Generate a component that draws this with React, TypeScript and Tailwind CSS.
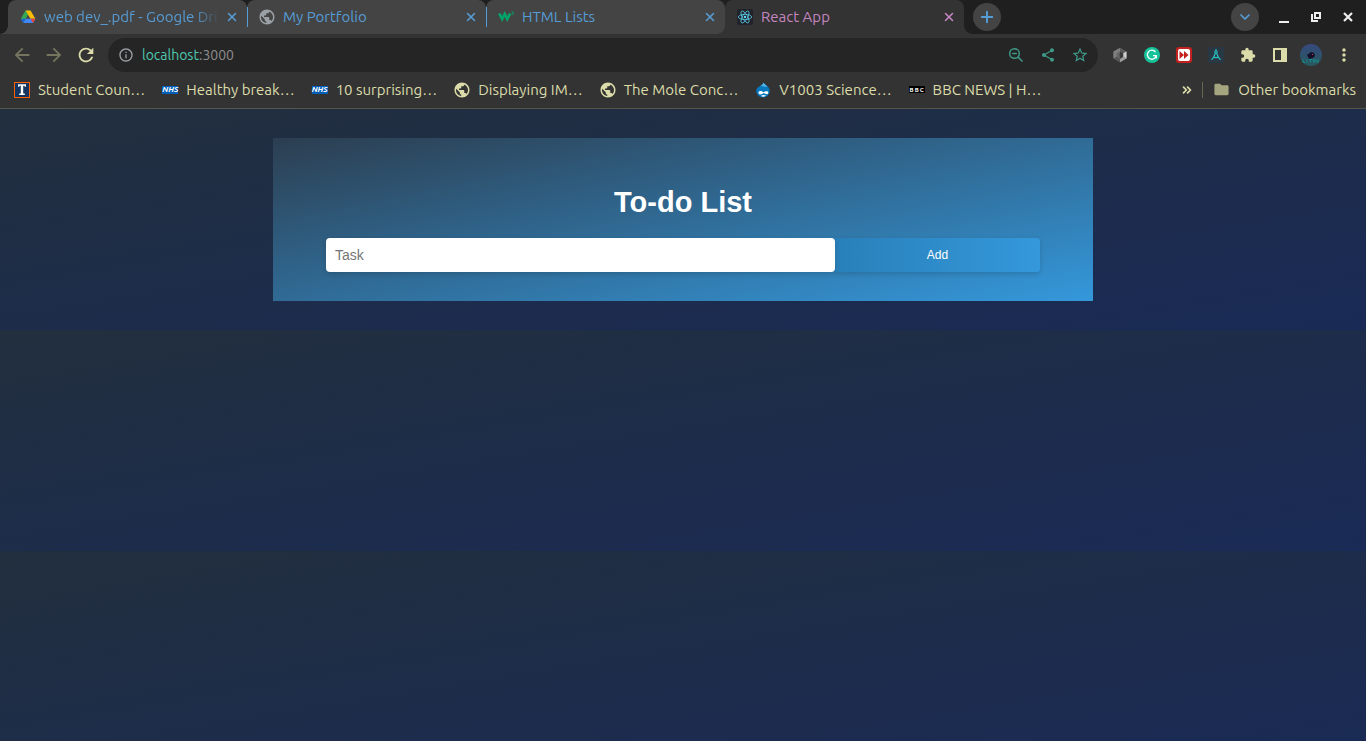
import React from "react";
import { X, Plus, ChevronDown, ChevronsRight } from "lucide-react";
import { MdArrowBack, MdArrowForward, MdRefresh, MdInfoOutline, MdPublic, MdShare, MdStarBorder, MdExtension, MdMoreVert, MdFolder } from "react-icons/md";

function Globe({ className }: { className: string }) {
  return (
    <span className={`flex size-4 shrink-0 items-center justify-center ${className}`} aria-hidden="true">
      <MdPublic size={18} className="shrink-0" />
    </span>
  );
}

function Drive() {
  return (
    <svg viewBox="0 0 16 16" className="size-4 shrink-0" aria-hidden="true">
      <path d="M5.500 1.500h5L8 5.800z" fill="#188038" />
      <path d="M5.500 1.500 8 5.800 3.400 14 .8 9.800z" fill="#34a853" />
      <path d="M10.500 1.500 15.400 9.800h-5L8 5.800 5.500 1.500z" fill="#fbbc04" />
      <path d="M5.700 9.800h9.700L13 14H3.200z" fill="#4285f4" />
      <path d="M10.500 9.800h4.900L13 14z" fill="#ea4335" />
      <path d="M.8 9.800h4.900L3.200 14z" fill="#1967d2" />
    </svg>
  );
}

function W3() {
  return (
    <svg viewBox="0 0 16 16" className="size-4 shrink-0" aria-hidden="true" fill="none" stroke="#04a36a">
      <path d="m1.200 4.500 3 5.500L6.700 5l2.500 5 3-5.500" strokeWidth="2.700" />
      <path d="M13.500 3h2l-1 1.200c1.500 0 1.300 1.900-.9 1.500" strokeWidth=".8" />
    </svg>
  );
}

function ReactLogo() {
  return (
    <svg viewBox="0 0 16 16" className="size-4 shrink-0" aria-hidden="true" fill="none" stroke="#61dafb" strokeWidth=".7">
      <rect width="16" height="16" rx="2" fill="#20232a" stroke="none" />
      <ellipse cx="8" cy="8" rx="6.700" ry="2.600" />
      <ellipse cx="8" cy="8" rx="6.700" ry="2.600" transform="rotate(60 8 8)" />
      <ellipse cx="8" cy="8" rx="6.700" ry="2.600" transform="rotate(120 8 8)" />
      <circle cx="8" cy="8" r="1.200" fill="#61dafb" stroke="none" />
    </svg>
  );
}

function Illinois() {
  return (
    <svg viewBox="0 0 16 16" className="size-4 shrink-0" aria-hidden="true">
      <rect x=".5" y=".5" width="15" height="15" fill="#13355f" stroke="#ff5f05" />
      <path d="M4 2.200h8v2.600h-1.200l-.5-1H9.200v7.700h1.600v1.500H5.200v-1.500h1.600V3.800H5.700l-.5 1H4z" fill="#fff" />
    </svg>
  );
}

function Nhs() {
  return (
    <span className="flex h-2 w-4 shrink-0 items-center justify-center bg-[#005eb8] text-[8px] leading-none font-bold text-white italic" aria-hidden="true">NHS</span>
  );
}

function Bbc() {
  return (
    <span className="flex h-[7px] w-4 shrink-0 items-center justify-between bg-black px-px text-[6px] leading-none font-bold text-white" aria-hidden="true">
      <span>B</span>
      <span>B</span>
      <span>C</span>
    </span>
  );
}

function Drupal() {
  return (
    <svg viewBox="0 0 16 16" className="size-4 shrink-0" aria-hidden="true">
      <path d="M8.500.5c.5 2 6.300 3.500 6.300 8.500a6.800 6.500 0 0 1-13.600 0c0-4.500 6-5 7.300-8.500z" fill="#0678be" />
      <path d="M8.500.5c.5 1.500 2.500 2.400 3.900 4.100C9 5.500 8 3.500 5.500 4 7 3 8 2 8.500.5z" fill="#53b5e6" />
      <path d="M3.500 10.800c0-2 2.700-2.600 5-.5 1.700-1.500 4.800-1.600 4.800.4 0 2.300-2.800 1.400-4.500.4-1.700 1.300-5.300 2.300-5.300-.3zM6 13.800c1.500-1 3.500-1 5-.2-1 1.200-3.500 1.500-5 .2z" fill="#fff" />
    </svg>
  );
}

type TabProps = { icon: React.ReactNode; title: string; active?: boolean; first?: boolean; divider?: boolean; fade?: boolean };

function Tab({ icon, title, active, first, divider, fade }: TabProps) {
  return (
    <div className={`relative flex h-[34px] w-[239px] min-w-0 items-center rounded-t-lg pr-[7px] ${active ? "bg-[#333] text-[#c586c0]" : "bg-[#444] text-[#569cd6]"}`}>
      {first && <span className="absolute bottom-0 -left-2 size-2 bg-[radial-gradient(circle_at_0_0,#1f1f1f_7.5px,#444_8px)]" />}
      {active && <span className="absolute bottom-0 -left-2 size-2 bg-[radial-gradient(circle_at_0_0,#444_7.5px,#333_8px)]" />}
      {active && <span className="absolute -right-2 bottom-0 size-2 bg-[radial-gradient(circle_at_100%_0,#1f1f1f_7.5px,#333_8px)]" />}
      <span className={`mr-[11px] h-5 w-px shrink-0 ${divider ? "bg-[#569cd6]" : "bg-transparent"}`} />
      {icon}
      <a href="#" className={`ml-2 min-w-0 flex-1 overflow-hidden whitespace-nowrap ${fade ? "mask-r-from-85% mask-r-to-100%" : ""}`}>{title}</a>
      <button aria-label={`Close ${title}`} className="ml-1 flex size-4 shrink-0 items-center justify-center"><X size={14} strokeWidth={2.600} /></button>
    </div>
  );
}

const bookmarks: { icon: React.ReactNode; label: string }[] = [
  { icon: <Illinois />, label: "Student Coun…" },
  { icon: <Nhs />, label: "Healthy break…" },
  { icon: <Nhs />, label: "10 surprising…" },
  { icon: <Globe className="text-[#dcdcaa]" />, label: "Displaying IM…" },
  { icon: <Globe className="text-[#dcdcaa]" />, label: "The Mole Conc…" },
  { icon: <Drupal />, label: "V1003 Science…" },
  { icon: <Bbc />, label: "BBC NEWS | H…" },
];

function Extensions() {
  return (
    <div className="flex shrink-0 items-center gap-4 text-[#dcdcaa]">
      <button aria-label="Shapes extension">
        <svg viewBox="0 0 16 16" className="size-4">
          <path d="M8 1 14.500 4.500v7L8 15.200l-6.500-3.700v-7z" fill="#6f6f6f" />
          <path d="M1.500 4.500 8 1v3.500L4.800 6.300v3.500L1.500 11.500z" fill="#7f7f7f" />
          <path d="M8 1l6.500 3.500-3.300 1.800L8 4.500z" fill="#5a5a5a" />
          <path d="M14.500 4.500v7l-3.300-1.700V6.300z" fill="#cfcfcf" />
          <path d="M1.500 11.500l3.300-1.700L8 11.700v3.500z" fill="#555" />
          <path d="M8 15.200v-3.500l3.200-1.900 3.300 1.700z" fill="#9a9a9a" />
          <path d="M8 4.500l3.200 1.800v3.500L8 11.700 7 8.500z" fill="#3a3a3a" />
          <path d="M8 4.500 4.800 6.300v3.500L8 11.700 7.500 8z" fill="#666" />
        </svg>
      </button>
      <button aria-label="Grammar extension">
        <svg viewBox="0 0 16 16" className="size-4">
          <circle cx="8" cy="8" r="8" fill="#15c39a" />
          <path d="M11.500 5A4.500 4.500 0 1 0 12.300 8.700H9M12.300 8.700v2.800" fill="none" stroke="#fff" strokeWidth="1.300" />
        </svg>
      </button>
      <button aria-label="Speed extension">
        <svg viewBox="0 0 16 16" className="size-4">
          <rect width="16" height="16" rx="3" fill="#c32020" />
          <rect x="2" y="2" width="12" height="12" rx="2" fill="#fff" />
          <path d="m3.500 4 4.500 4-4.500 4zM8 4l4.500 4L8 12z" fill="#c32020" />
        </svg>
      </button>
      <button aria-label="Compass extension">
        <svg viewBox="0 0 16 16" className="size-4">
          <rect width="16" height="16" rx="2.500" fill="#293845" />
          <path d="M8 2v2M7.500 6 5.200 11l-1.700 1.800M8.500 6l2.300 5 1.700 1.800M5.500 9.800c1.500 1 3.500 1 5 0" fill="none" stroke="#28c8c8" strokeWidth="1.100" />
          <circle cx="8" cy="5" r="1.300" fill="none" stroke="#28c8c8" />
        </svg>
      </button>
      <button aria-label="Extensions"><MdExtension size={16} /></button>
      <button aria-label="Side panel">
        <svg viewBox="0 0 16 16" className="size-4"><path d="M1 1h14v14H1zM3 3v10h6V3z" fill="currentColor" fillRule="evenodd" /></svg>
      </button>
    </div>
  );
}

export default function App() {
  return (
    <div className="flex min-h-screen flex-col font-['Liberation_Sans',Arial,sans-serif]">
      <header className="bg-[#333] font-['Ubuntu','Noto_Sans',sans-serif] text-[15px] leading-5">
        <div className="flex h-[34px] items-center bg-[#1f1f1f] pl-2">
          <nav className="flex min-w-0" aria-label="Tabs">
            <Tab icon={<Drive />} title="web dev_.pdf - Google Dri" first fade />
            <Tab icon={<Globe className="text-[#9aa0a6]" />} title="My Portfolio" divider />
            <Tab icon={<W3 />} title="HTML Lists" divider />
            <Tab icon={<ReactLogo />} title="React App" active />
          </nav>
          <button aria-label="New tab" className="ml-[9px] flex size-7 shrink-0 items-center justify-center rounded-full bg-[#444] text-[#569cd6]"><Plus size={18} strokeWidth={2.600} /></button>
          <div className="mr-[10px] ml-auto flex shrink-0 items-center gap-4 text-[#eee]">
            <button aria-label="Search tabs" className="mr-px flex size-7 items-center justify-center rounded-full bg-[#444] text-[#569cd6]"><ChevronDown size={16} strokeWidth={2.600} /></button>
            <button aria-label="Minimize"><svg viewBox="0 0 16 16" className="size-4"><path d="M3 12h10v2H3z" fill="currentColor" /></svg></button>
            <button aria-label="Restore"><svg viewBox="0 0 16 16" className="size-4" fill="none" stroke="currentColor" strokeWidth="2"><path d="M7 4h5v5H7z" /><path d="M4 5v7h6" /></svg></button>
            <button aria-label="Close window"><svg viewBox="0 0 16 16" className="size-4"><path d="m4 4 8 8m0-8-8 8" stroke="currentColor" strokeWidth="2.200" /></svg></button>
          </div>
        </div>
        <div className="flex h-[42px] items-center pr-3 pl-[11px]">
          <div className="flex shrink-0 gap-[10px] text-[#75755f]">
            <button aria-label="Back"><MdArrowBack size={22} /></button>
            <button aria-label="Forward"><MdArrowForward size={22} /></button>
            <button aria-label="Reload" className="text-[#dcdcaa]"><MdRefresh size={22} /></button>
          </div>
          <div className="ml-[11px] flex h-[34px] min-w-0 flex-1 items-center rounded-full bg-[#252525] pr-[9px] pl-[10px] text-sm text-[#4ec9b0]">
            <MdInfoOutline size={16} className="shrink-0 text-[#9aa0a6]" />
            <span className="ml-2 flex-1">localhost<span className="text-[#8c8c8c]">:3000</span></span>
            <div className="flex gap-[14px] text-[#3e9a88]">
              <button aria-label="Zoom">
                <svg viewBox="0 0 18 18" className="size-[18px]" fill="none" stroke="currentColor" strokeWidth="1.500"><circle cx="7.500" cy="7.500" r="4.800" /><path d="m11 11 4.500 4.500M5.200 7.500h4.600" /></svg>
              </button>
              <button aria-label="Share"><MdShare size={16} className="mx-px" /></button>
              <button aria-label="Bookmark"><MdStarBorder size={18} /></button>
            </div>
          </div>
          <div className="ml-[14px] flex items-center gap-3">
            <Extensions />
            <button aria-label="Profile">
              <svg viewBox="0 0 22 22" className="size-[22px]">
                <defs><linearGradient id="av" x2="0" y2="1"><stop stopColor="#36497c" /><stop offset="1" stopColor="#285a5e" /></linearGradient></defs>
                <circle cx="11" cy="11" r="11" fill="url(#av)" />
                <path d="m7 11 4-3 3 1 1 3-2 2-4 1z" fill="#14102c" />
                <path d="M12 10h1v1h-1z" fill="#c44" />
                <path d="M3 15.500v3h2m2-3v3m2-3h3m-1.500 0v3m3-3v3m1.500 0v-3l3 3v-3" stroke="#0e9d94" strokeWidth=".8" fill="none" />
              </svg>
            </button>
            <button aria-label="Menu" className="text-[#dcdcaa]"><MdMoreVert size={20} /></button>
          </div>
        </div>
        <div className="flex h-[33px] items-center border-b border-[#55554a] pr-[10px] pb-[5px] pl-[14px] text-[#dcdcaa]">
          <nav className="flex min-w-0 gap-[17px]" aria-label="Bookmarks">
            {bookmarks.map((b) => (
              <a href="#" key={b.label} className="flex items-center gap-2 whitespace-nowrap">{b.icon}<span>{b.label}</span></a>
            ))}
          </nav>
          <button aria-label="More bookmarks" className="ml-auto"><ChevronsRight size={14} strokeWidth={3} /></button>
          <span className="mr-[10px] ml-2 h-4 w-px bg-[#666655]" />
          <a href="#" className="flex items-center gap-2 whitespace-nowrap"><MdFolder size={17} className="text-[#a5a580]" />Other bookmarks</a>
        </div>
      </header>
      <main className="flex-1 bg-linear-to-br/srgb from-[#222f3e] to-[#192a56] bg-size-[100%_221px] px-5 pt-[29px]">
        <section className="mx-auto max-w-[820px] bg-linear-to-br/srgb from-[#2c3e50] to-[#3498db] px-[53px] pt-[46px] pb-[29px]">
          <h1 className="text-center text-[29px] leading-9 font-bold text-white">To-do List</h1>
          <form className="mt-[18px] grid h-[34px] grid-cols-[509fr_205fr]" onSubmit={(e) => e.preventDefault()}>
            <input aria-label="Task" placeholder="Task" className="relative min-w-0 rounded-[4px] bg-white px-[9px] text-[14px] shadow-[0_2px_5px_rgba(0,0,0,0.15)] outline-none placeholder:text-[#757575]" />
            <button className="rounded-r-[4px] bg-linear-to-r/srgb from-[#2980b9] to-[#3498db] text-xs text-white shadow-[0_2px_5px_rgba(0,0,0,0.15)]">Add</button>
          </form>
        </section>
      </main>
    </div>
  );
}
